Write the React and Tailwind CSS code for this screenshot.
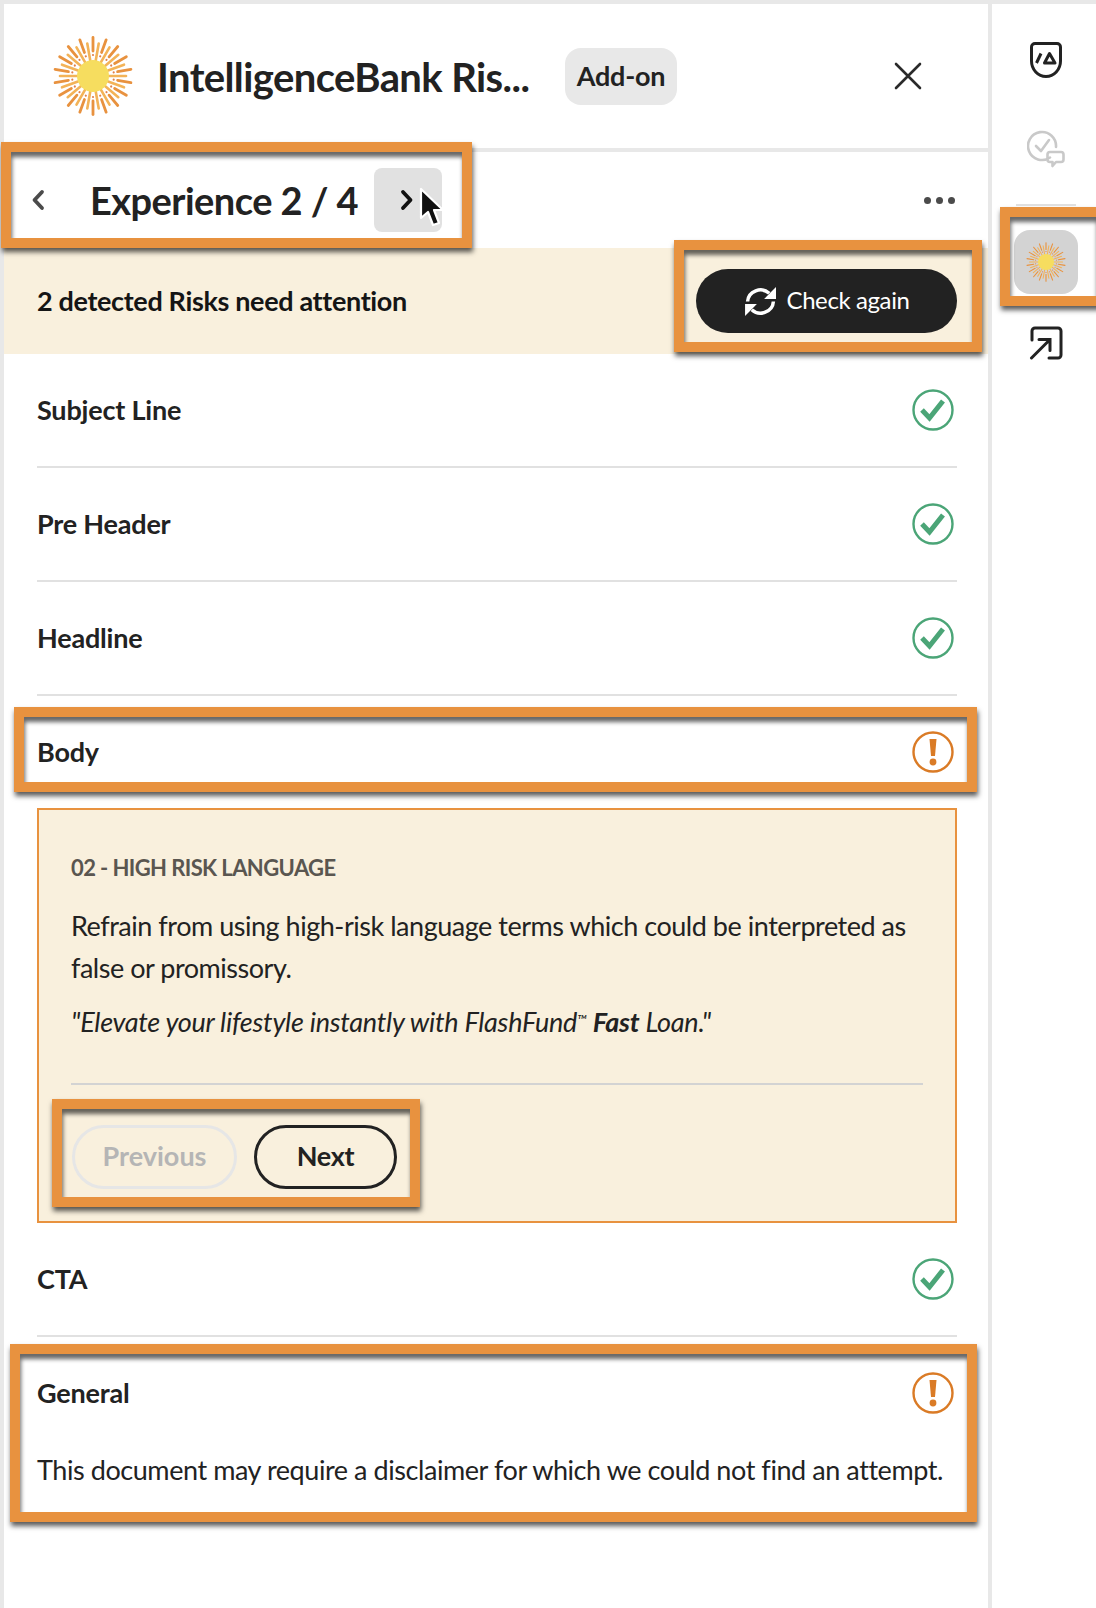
import React from 'react';

const font = "font-['Lato','Liberation_Sans',sans-serif]";

// sun logo, rays drawn from angle lists
function Sun({ size = 80, thin = false }) {
  const outer = Array.from({ length: 18 }, (_, i) => (i * 360) / 18);
  const inner = outer.map((a) => a + 10);
  return (
    <svg width={size} height={size} viewBox="-40 -40 80 80">
      {outer.map((a) => (
        <line key={a} x1="0" y1="-25" x2="0" y2="-38.5" transform={`rotate(${a})`} stroke="#e8923f" strokeWidth={thin ? 2.2 : 2.8} strokeLinecap="round" />
      ))}
      {inner.map((a) => (
        <line key={a} x1="0" y1="-16" x2="0" y2="-33" transform={`rotate(${a})`} stroke="#f3b358" strokeWidth={thin ? 2.2 : 2.6} strokeLinecap="round" />
      ))}
      {outer.map((a) => (
        <circle key={a} cx="0" cy="-21" r="1.1" transform={`rotate(${a})`} fill="#e0804a" />
      ))}
      <circle r="16" fill="#f6dd5f" />
    </svg>
  );
}

function CheckIcon() {
  return (
    <svg width="42" height="42" viewBox="0 0 42 42" fill="none">
      <circle cx="21" cy="21" r="19.5" stroke="#4ba577" strokeWidth="2.4" />
      <path d="M10 21 L17.5 29 L31 12" stroke="#4ba577" strokeWidth="5" />
    </svg>
  );
}

function AlertIcon() {
  return (
    <svg width="42" height="42" viewBox="0 0 42 42" fill="none">
      <circle cx="21" cy="21" r="19.5" stroke="#da7b26" strokeWidth="2.4" />
      <path d="M17.5 8 H24.5 L23 25 H19 Z" fill="#da7b26" />
      <circle cx="21" cy="31" r="3.4" fill="#da7b26" />
    </svg>
  );
}

function Row({ label, status }) {
  return (
    <div className="h-[114px] border-b-2 border-[#e1e1e1] flex items-center justify-between pr-[3px]">
      <span className="text-[27px] font-bold text-[#222] tracking-[-0.2px]">{label}</span>
      {status === 'ok' ? <CheckIcon /> : <AlertIcon />}
    </div>
  );
}

// orange callout frames painted on top of the screenshot
function Callout({ className }) {
  return (
    <div
      className={`absolute pointer-events-none border-[10px] border-[#e8923f] shadow-[1px_4px_5px_rgba(0,0,0,0.65),inset_1px_5px_4px_rgba(0,0,0,0.6)] ${className}`}
    />
  );
}

export default function App() {
  return (
    <div className={`relative w-[1096px] h-[1608px] bg-white overflow-hidden ${font}`}>
      <div className="h-1 bg-[#e8e8e8]" />
      <div className="flex h-[1604px]">
        <div className="w-1 bg-[#e8e8e8]" />

        {/* main panel */}
        <div className="w-[984px] flex flex-col">
          <div className="h-[148px] shrink-0 border-b-4 border-[#e8e8e8] flex items-center pl-[49px] -mb-[4px]">
            <div className="w-[80px] h-[80px]">
              <Sun />
            </div>
            <span className="ml-[24px] mt-[2px] text-[40px] font-bold text-[#222] tracking-[-0.6px] w-[398px] whitespace-nowrap">IntelligenceBank Ris...</span>
            <span className="ml-[10px] w-[112px] h-[57px] rounded-[16px] bg-[#e8e8e8] flex items-center justify-center text-[27px] font-bold text-[#222] tracking-[-0.2px]">Add-on</span>
            <svg className="ml-[217px]" width="28" height="28" viewBox="0 0 28 28" fill="none">
              <path d="M2 2 L26 26 M26 2 L2 26" stroke="#2a2a2a" strokeWidth="2.6" strokeLinecap="round" />
            </svg>
          </div>

          <div className="h-[100px] shrink-0 pt-[4px] flex items-center pl-[27px] pr-[33px]">
            <svg width="14" height="24" viewBox="0 0 14 24" fill="none">
              <path d="M11 4 L3.5 12 L11 20" stroke="#4b4b4b" strokeWidth="3.8" strokeLinecap="round" strokeLinejoin="round" />
            </svg>
            <span className="ml-[45px] w-[284px] text-[38px] font-bold text-[#222] tracking-[-0.55px] whitespace-nowrap">Experience 2 / 4</span>
            <div className="w-[68px] h-[64px] rounded-lg bg-[#e1e1e1] flex items-center pl-[26px]">
              <svg width="14" height="24" viewBox="0 0 14 24" fill="none">
                <path d="M3 4 L10.5 12 L3 20" stroke="#111" strokeWidth="3.8" strokeLinecap="round" strokeLinejoin="round" />
              </svg>
            </div>
            <div className="ml-auto flex gap-[5px]">
              <span className="w-[7px] h-[7px] rounded-full bg-[#4b4b4b]" />
              <span className="w-[7px] h-[7px] rounded-full bg-[#4b4b4b]" />
              <span className="w-[7px] h-[7px] rounded-full bg-[#4b4b4b]" />
            </div>
          </div>

          <div className="h-[106px] shrink-0 bg-[#f9f0dd] flex items-center justify-between pl-[33px] pr-[31px]">
            <span className="text-[27px] font-bold text-[#151515] tracking-[-0.35px]">2 detected Risks need attention</span>
            <button className="w-[261px] h-[64px] rounded-full bg-[#222] flex items-center justify-center gap-[10px] text-white text-[24px] font-normal tracking-[-0.4px]">
              <svg width="33" height="31" viewBox="0 0 32 30" fill="none">
                <path d="M3.5 15 A12.5 12 0 0 1 24.5 7" stroke="#fff" strokeWidth="3.4" />
                <path d="M31 1 V12.5 H19.5 Z" fill="#fff" />
                <path d="M28.5 15 A12.5 12 0 0 1 7.5 23" stroke="#fff" strokeWidth="3.4" />
                <path d="M1 29 V17.5 H12.5 Z" fill="#fff" />
              </svg>
              <span className="-mt-[2px]">Check again</span>
            </button>
          </div>

          <div className="pl-[33px] pr-[31px] flex flex-col">
            <Row label="Subject Line" status="ok" />
            <Row label="Pre Header" status="ok" />
            <Row label="Headline" status="ok" />
            <div className="h-[112px] flex items-center justify-between pr-[3px]">
              <span className="text-[27px] font-bold text-[#222] tracking-[-0.2px]">Body</span>
              <AlertIcon />
            </div>

            <div className="border-2 border-[#e8923f] bg-[#f9f0dd] px-8 pt-[43px] pb-8">
              <div className="text-[22px] leading-[30px] font-bold text-[#5a5650] tracking-[-0.6px]">02 - HIGH RISK LANGUAGE</div>
              <p className="mt-[22px] text-[27px] leading-[42px] text-[#222] tracking-[-0.47px]">
                Refrain from using high-risk language terms which could be interpreted as false or promissory.
              </p>
              <p className="mt-3 text-[27px] leading-[42px] italic text-[#222] tracking-[-0.25px] whitespace-nowrap">
                "Elevate your lifestyle instantly with FlashFund<sup className="text-[14px]">™</sup> <b>Fast</b> Loan."
              </p>
              <div className="mt-[40px] h-[2px] bg-[#d3d3d3]" />
              <div className="mt-[40px] flex gap-[17px] pl-px">
                <button className="w-[165px] h-[64px] pb-[2px] rounded-full border-[3px] border-[#e6e6e6] text-[27px] font-bold text-[#b5b5b5]">Previous</button>
                <button className="w-[143px] h-[64px] pb-[2px] rounded-full border-[3px] border-[#222] text-[27px] font-bold text-[#222] tracking-[-0.3px]">Next</button>
              </div>
            </div>

            <Row label="CTA" status="ok" />
            <div className="h-[112px] flex items-center justify-between pr-[3px]">
              <span className="text-[27px] font-bold text-[#222] tracking-[-0.2px]">General</span>
              <AlertIcon />
            </div>
            <p className="text-[27px] leading-[42px] text-[#222] tracking-[-0.43px] whitespace-nowrap">
              This document may require a disclaimer for which we could not find an attempt.
            </p>
          </div>
        </div>

        <div className="w-1 bg-[#e8e8e8]" />

        {/* right rail */}
        <div className="flex-1 flex flex-col items-center pt-[38px] pl-1">
          <svg width="32" height="36" viewBox="0 0 32 36" fill="none">
            <path d="M5 1.5 H27 A3.5 3.5 0 0 1 30.5 5 V19 A14.5 15.5 0 0 1 1.5 19 V5 A3.5 3.5 0 0 1 5 1.5 Z" stroke="#222" strokeWidth="3" />
            <path d="M6.5 21 L11 11.5" stroke="#222" strokeWidth="3" />
            <path d="M14.5 21 L19.5 11.5 L25 21 Z" stroke="#222" strokeWidth="3" strokeLinejoin="round" />
          </svg>
          <svg className="mt-[52px]" width="38" height="38" viewBox="0 0 38 38" fill="none">
            <path d="M23 27.5 A14 14 0 1 1 29 17" stroke="#c9c9c9" strokeWidth="2.6" strokeLinecap="round" />
            <path d="M9 16 L14 21 L22 10" stroke="#c9c9c9" strokeWidth="2.6" strokeLinecap="round" strokeLinejoin="round" />
            <path d="M23 22 H34 A2.5 2.5 0 0 1 36.5 24.5 V29.5 A2.5 2.5 0 0 1 34 32 H29 L25.5 36 V32 H23 A2.5 2.5 0 0 1 20.5 29.5 V24.5 A2.5 2.5 0 0 1 23 22 Z" stroke="#c9c9c9" strokeWidth="2.6" strokeLinejoin="round" />
          </svg>
          <div className="mt-[36px] w-[60px] h-[2px] bg-[#e1e1e1]" />
          <div className="mt-[24px] w-[64px] h-[64px] rounded-[16px] bg-[#d3d3d3] flex items-center justify-center">
            <Sun size={40} thin />
          </div>
          <svg className="mt-[32px]" width="34" height="34" viewBox="0 0 34 34" fill="none">
            <path d="M3 14 V5 A3 3 0 0 1 6 2 H29 A3 3 0 0 1 32 5 V29 A3 3 0 0 1 29 32 H20" stroke="#222" strokeWidth="3" strokeLinecap="round" />
            <path d="M2.5 32 L20 14.5 M10 13.5 H21 V24.5" stroke="#222" strokeWidth="3" strokeLinecap="round" />
          </svg>
        </div>
      </div>

      <Callout className="left-[1px] top-[142px] w-[471px] h-[106px]" />
      <Callout className="left-[674px] top-[240px] w-[308px] h-[112px]" />
      <Callout className="left-[1000px] top-[207px] w-[106px] h-[99px]" />
      <Callout className="left-[14px] top-[707px] w-[963px] h-[85px]" />
      <Callout className="left-[52px] top-[1099px] w-[368px] h-[108px]" />
      <Callout className="left-[10px] top-[1344px] w-[967px] h-[178px]" />

      {/* mouse pointer */}
      <svg className="absolute left-[419px] top-[187px]" width="26" height="42" viewBox="0 0 26 42">
        <path d="M2 2 L2 31 L9 25 L14 38 L20 36 L15 23 L24 23 Z" fill="#111" stroke="#fff" strokeWidth="2.2" strokeLinejoin="round" />
      </svg>
    </div>
  );
}
